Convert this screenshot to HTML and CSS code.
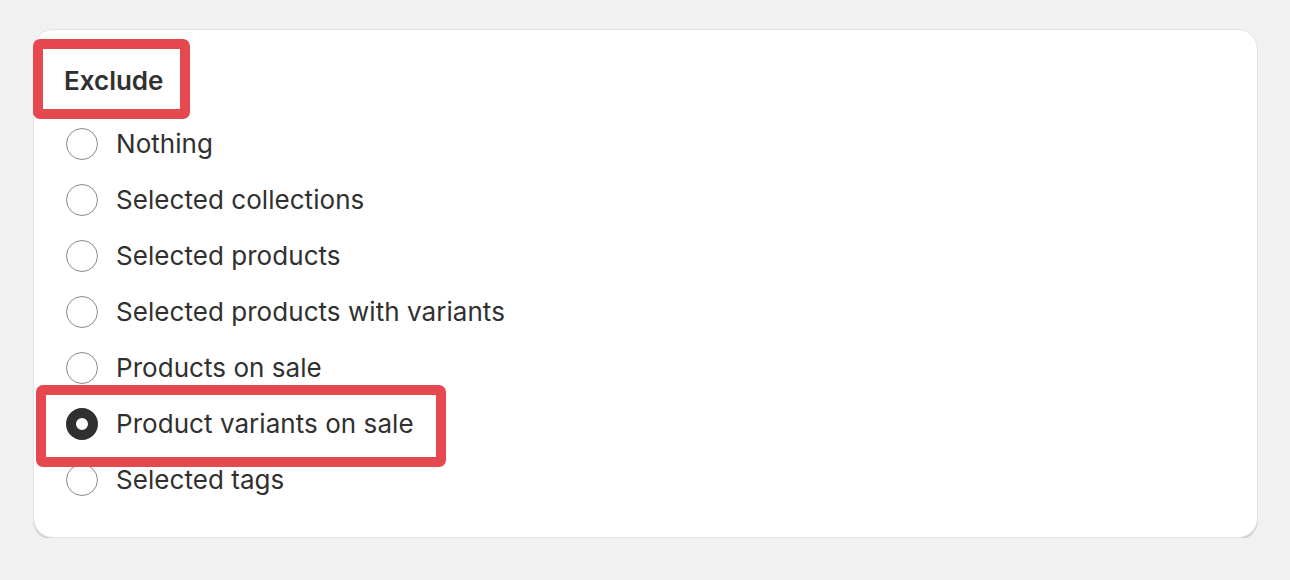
FILE: index.html
```html
<!DOCTYPE html>
<html>
<head>
<meta charset="utf-8">
<link rel="stylesheet" href="styles.css">
</head>
<body>
<div class="card">
  <div class="heading">Exclude</div>
  <ul class="options">
    <li class="option"><span class="radio"></span><span class="label">Nothing</span></li>
    <li class="option"><span class="radio"></span><span class="label">Selected collections</span></li>
    <li class="option"><span class="radio"></span><span class="label">Selected products</span></li>
    <li class="option"><span class="radio"></span><span class="label">Selected products with variants</span></li>
    <li class="option"><span class="radio"></span><span class="label">Products on sale</span></li>
    <li class="option"><span class="radio checked"></span><span class="label">Product variants on sale</span></li>
    <li class="option"><span class="radio"></span><span class="label">Selected tags</span></li>
  </ul>
  <div class="mark mark-heading"></div>
  <div class="mark mark-option"></div>
</div>
</body>
</html>
```
FILE: styles.css
```css
html, body {
  margin: 0;
  padding: 0;
  background: #f1f1f1;
}
body {
  padding: 29px 32px 0 33px;
  font-family: Inter, "Noto Sans", sans-serif;
  color: #303030;
}
.card {
  position: relative;
  box-sizing: border-box;
  width: 1225px;
  height: 509px;
  background: #fff;
  border: 1.5px solid #e3e3e3;
  border-radius: 20px;
  box-shadow: 0 2px 0 #d2d2d2;
  padding: 31px 31px 0 31px;
}
.heading {
  font-size: 26px;
  font-weight: 640;
  line-height: 40px;
  height: 40px;
  margin-left: -1px;
}
.options {
  list-style: none;
  margin: 15px 0 0 0;
  padding: 0;
}
.option {
  display: flex;
  align-items: center;
  height: 56px;
}
.radio {
  box-sizing: border-box;
  width: 32px;
  height: 32px;
  border-radius: 50%;
  border: 1.4px solid #8a8a8a;
  margin-left: 1px;
  margin-right: 18px;
  flex: none;
}
.radio.checked {
  border: 10px solid #303030;
}
.label {
  font-size: 26px;
  line-height: 40px;
  letter-spacing: 0.05px;
}
.mark {
  position: absolute;
  box-sizing: border-box;
  border: 10px solid #e5484e;
  border-radius: 7px;
}
.mark-heading {
  left: -1.5px;
  top: 8.5px;
  width: 157px;
  height: 80px;
}
.mark-option {
  left: 1.5px;
  top: 354.5px;
  width: 410px;
  height: 82px;
}
```
